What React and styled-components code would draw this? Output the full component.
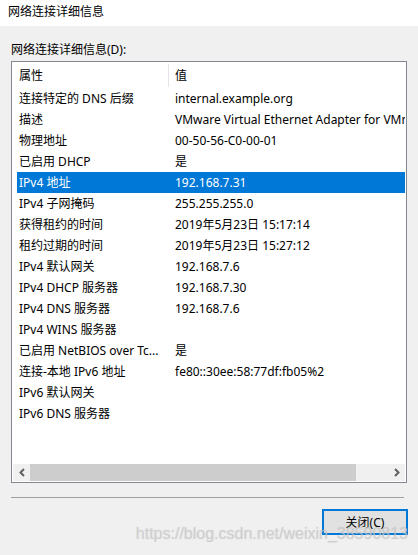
import React from 'react';
import styled, { createGlobalStyle } from 'styled-components';

const ROWS = [
  ['连接特定的 DNS 后缀', 'internal.example.org'],
  ['描述', 'VMware Virtual Ethernet Adapter for VMnet8'],
  ['物理地址', '00-50-56-C0-00-01'],
  ['已启用 DHCP', '是'],
  ['IPv4 地址', '192.168.7.31'],
  ['IPv4 子网掩码', '255.255.255.0'],
  ['获得租约的时间', '2019年5月23日 15:17:14'],
  ['租约过期的时间', '2019年5月23日 15:27:12'],
  ['IPv4 默认网关', '192.168.7.6'],
  ['IPv4 DHCP 服务器', '192.168.7.30'],
  ['IPv4 DNS 服务器', '192.168.7.6'],
  ['IPv4 WINS 服务器', ''],
  ['已启用 NetBIOS over Tc...', '是'],
  ['连接-本地 IPv6 地址', 'fe80::30ee:58:77df:fb05%2'],
  ['IPv6 默认网关', ''],
  ['IPv6 DNS 服务器', ''],
];

const SELECTED = 4;

const GlobalStyle = createGlobalStyle`
  html, body {
    margin: 0;
    padding: 0;
    background: #f0f0f0;
  }
  body {
    font-family: "Noto Sans", "Noto Sans CJK SC", sans-serif;
    font-size: 12px;
    color: #000;
  }
`;

const Chevron = ({ dir }) => (
  <svg width="8" height="9" viewBox="0 0 8 9">
    <path
      d={dir === 'left' ? 'M6 1 L2.5 4.5 L6 8' : 'M2 1 L5.5 4.5 L2 8'}
      fill="none"
      stroke="#606060"
      strokeWidth="2"
    />
  </svg>
);

const App = () => (
  <Window>
    <GlobalStyle />
    <TitleBar>网络连接详细信息</TitleBar>

    <Body>
      <Label>网络连接详细信息(D):</Label>

      <ListBox>
        <Header>
          <HeaderCell $divider>属性</HeaderCell>
          <HeaderCell $pad={6}>值</HeaderCell>
        </Header>

        <Rows>
          {ROWS.map(([name, value], i) => (
            <Row key={name} $selected={i === SELECTED}>
              <Cell>{name}</Cell>
              <Cell>{value}</Cell>
            </Row>
          ))}
        </Rows>

        <HScroll>
          <Arrow><Chevron dir="left" /></Arrow>
          <Track>
            <Thumb />
          </Track>
          <Arrow><Chevron dir="right" /></Arrow>
        </HScroll>
      </ListBox>

      <Separator />

      <Footer>
        <CloseButton>关闭(C)</CloseButton>
        <Watermark>https://blog.csdn.net/weixin_38590813</Watermark>
      </Footer>
    </Body>
  </Window>
);

const Window = styled.div`
  width: 418px;
  height: 555px;
  background: #f0f0f0;
  display: flex;
  flex-direction: column;
  overflow: hidden;
`;

const TitleBar = styled.div`
  height: 26px;
  line-height: 24px;
  padding-left: 8px;
  background: #fff;
  white-space: nowrap;
`;

const Body = styled.div`
  padding: 16px 10px 0 11px;
  display: flex;
  flex-direction: column;
`;

const Label = styled.div`
  line-height: 16px;
  margin-bottom: 3px;
`;

const ListBox = styled.div`
  box-sizing: border-box;
  width: 396px;
  height: 422px;
  border: 1px solid #828790;
  background: #fff;
  padding: 1px;
  display: flex;
  flex-direction: column;
`;

const Header = styled.div`
  height: 25px;
  display: grid;
  grid-template-columns: 152px 1fr;
  margin-left: 4px;
  align-items: center;
`;

const HeaderCell = styled.div`
  padding-left: ${p => p.$pad || 2}px;
  line-height: 23px;
  border-right: ${p => (p.$divider ? '1px solid #e5e5e5' : 'none')};
  white-space: nowrap;
`;

const Rows = styled.div`
  flex: 1;
  overflow: hidden;
`;

const Row = styled.div`
  height: 21px;
  line-height: 21px;
  margin-left: 4px;
  display: grid;
  grid-template-columns: 156px 1fr;
  background: ${p => (p.$selected ? '#0078d7' : 'transparent')};
  color: ${p => (p.$selected ? '#fff' : '#000')};
`;

const Cell = styled.div`
  padding-left: 2px;
  white-space: nowrap;
  overflow: hidden;
`;

const HScroll = styled.div`
  height: 17px;
  background: #f0f0f0;
  display: flex;
`;

const Arrow = styled.div`
  width: 17px;
  display: flex;
  align-items: center;
  justify-content: center;
`;

const Track = styled.div`
  flex: 1;
  display: flex;
  align-items: stretch;
`;

const Thumb = styled.div`
  width: 326px;
  background: #cdcdcd;
`;

const Separator = styled.div`
  width: 393px;
  height: 1px;
  background: #a0a0a0;
  margin-top: 14px;
`;

const Footer = styled.div`
  position: relative;
  display: flex;
  justify-content: flex-end;
  padding-top: 11px;
`;

const CloseButton = styled.button`
  box-sizing: border-box;
  width: 86px;
  height: 26px;
  border: 2px solid #0078d7;
  background: #e1e1e1;
  font-family: inherit;
  font-size: 12px;
  color: #000;
  padding: 0;
`;

const Watermark = styled.div`
  position: absolute;
  right: 0;
  top: 27px;
  font-family: "Liberation Sans", sans-serif;
  font-size: 16px;
  line-height: 17px;
  color: rgba(205, 205, 205, 0.7);
  text-shadow: 0 0 1px rgba(150, 150, 150, 0.35);
  white-space: nowrap;
  pointer-events: none;
`;

export default App;
